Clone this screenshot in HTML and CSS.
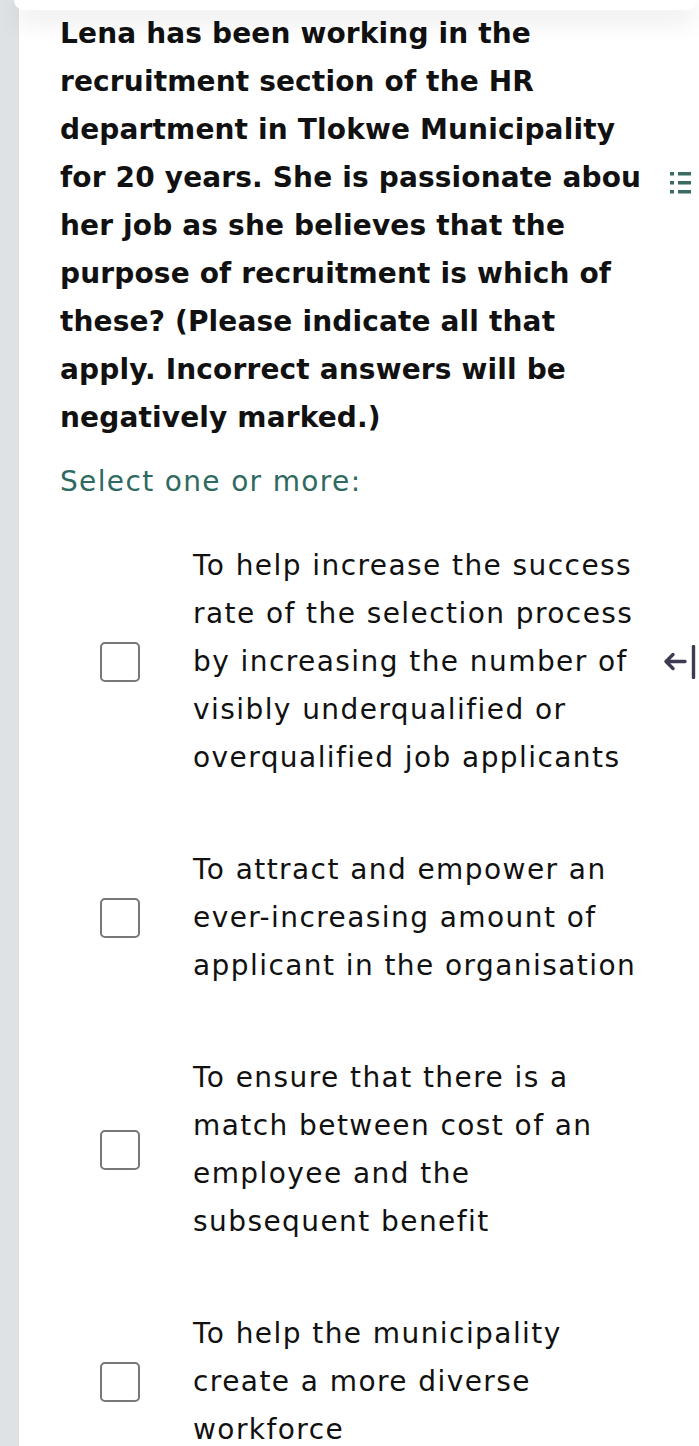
FILE: index.html
```html
<!DOCTYPE html>
<html>
<head>
<meta charset="utf-8">
<link rel="stylesheet" href="styles.css">
</head>
<body>
<div class="page">
  <div class="rail"></div>
  <div class="main">
    <div class="topcard"></div>
    <div class="question">
      <div class="qtext">Lena has been working in the<br>recruitment section of the HR<br>department in Tlokwe Municipality<br>for 20 years. She is passionate about<br>her job as she believes that the<br>purpose of recruitment is which of<br>these? (Please indicate all that<br>apply. Incorrect answers will be<br>negatively marked.)</div>
      <div class="navicon">
        <svg width="21" height="22" viewBox="0 0 21 22"><rect x="0" y="0" width="4" height="3.5" fill="#3b6b62"/><rect x="8" y="0" width="13" height="3.5" fill="#3b6b62"/><rect x="0" y="9" width="4" height="3.5" fill="#3b6b62"/><rect x="8" y="9" width="13" height="3.5" fill="#3b6b62"/><rect x="0" y="18" width="4" height="3.5" fill="#3b6b62"/><rect x="8" y="18" width="13" height="3.5" fill="#3b6b62"/></svg>
      </div>
    </div>
    <div class="prompt">Select one or more:</div>
    <div class="options">
      <div class="option">
        <span class="box"></span>
        <span class="otext">To help increase the success<br>rate of the selection process<br>by increasing the number of<br>visibly underqualified or<br>overqualified job applicants</span>
        <span class="side">
          <svg width="34" height="34" viewBox="0 0 34 34"><path d="M22 16.5H3M10 9.5L3 16.5L10 23.5" fill="none" stroke="#3c3b52" stroke-width="3.4" stroke-linecap="round" stroke-linejoin="round"/><path d="M30.5 1.5v31" stroke="#3c3b52" stroke-width="3.4" stroke-linecap="round"/></svg>
        </span>
      </div>
      <div class="option">
        <span class="box"></span>
        <span class="otext">To attract and empower an<br>ever-increasing amount of<br>applicant in the organisation</span>
        <span class="side"></span>
      </div>
      <div class="option">
        <span class="box"></span>
        <span class="otext">To ensure that there is a<br>match between cost of an<br>employee and the<br>subsequent benefit</span>
        <span class="side"></span>
      </div>
      <div class="option">
        <span class="box"></span>
        <span class="otext">To help the municipality<br>create a more diverse<br>workforce</span>
        <span class="side"></span>
      </div>
    </div>
  </div>
</div>
</body>
</html>
```

FILE: styles.css
```css
html, body {
  margin: 0;
  padding: 0;
  background: #ffffff;
}
body {
  font-family: "DejaVu Sans", "Noto Sans", sans-serif;
  color: #111111;
  overflow: hidden;
}
.page {
  display: flex;
  min-height: 1446px;
}
.rail {
  width: 19px;
  flex: none;
  background: #dfe2e5;
}
.main {
  flex: 1;
  min-width: 0;
  background: #ffffff;
  position: relative;
}
.topcard {
  height: 10px;
  margin: 0 2px 0 -5px;
  background: #ffffff;
  border-radius: 0 0 10px 10px;
  box-shadow: 0 8px 26px rgba(0, 0, 0, 0.15);
  position: relative;
  z-index: 2;
}
.question {
  position: relative;
  margin-top: 0;
  padding-left: 41px;
}
.qtext {
  white-space: nowrap;
  font-weight: 700;
  font-size: 28px;
  line-height: 48px;
  letter-spacing: 0.15px;
}
.navicon {
  position: absolute;
  left: 622px;
  top: 148px;
  width: 58px;
  height: 50px;
  background: #ffffff;
  display: flex;
  align-items: center;
  padding-left: 29px;
  box-sizing: border-box;
}
.prompt {
  margin-top: 16px;
  padding-left: 41px;
  font-size: 28px;
  line-height: 48px;
  letter-spacing: 1.35px;
  color: #2e6a60;
}
.options {
  display: flex;
  flex-direction: column;
  gap: 64px;
  padding: 36px 0 0 81px;
}
.option {
  display: flex;
  align-items: center;
}
.box {
  flex: none;
  width: 36px;
  height: 36px;
  border: 2px solid #787878;
  border-radius: 5px;
  margin-right: 53px;
}
.otext {
  flex: 1;
  min-width: 0;
  white-space: nowrap;
  font-size: 28px;
  line-height: 48px;
  letter-spacing: 1.43px;
}
.side {
  flex: none;
  width: 34px;
  margin-right: 2px;
  display: flex;
}
```
